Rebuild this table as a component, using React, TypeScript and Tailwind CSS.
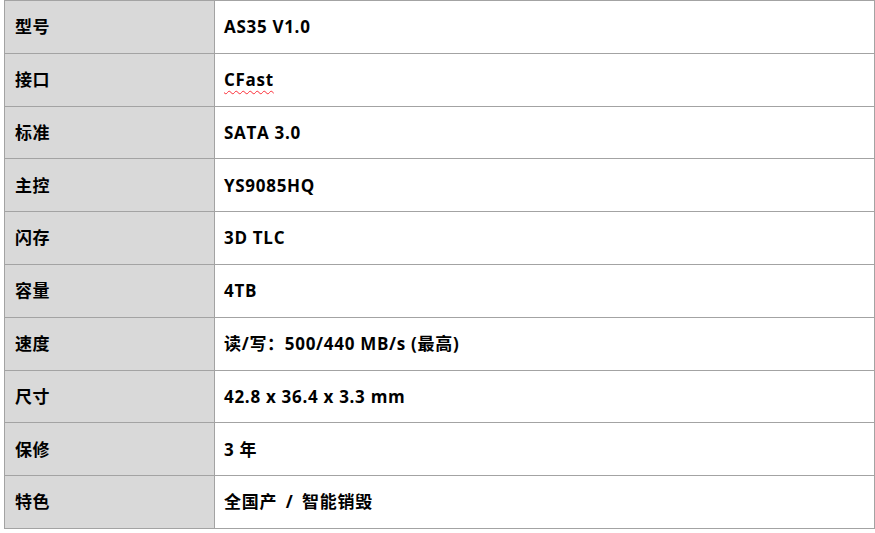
import React from "react";

const rows: [string, string][] = [
  ["型号", "AS35 V1.0"],
  ["接口", "CFast"],
  ["标准", "SATA 3.0"],
  ["主控", "YS9085HQ"],
  ["闪存", "3D TLC"],
  ["容量", "4TB"],
  ["速度", "读/写：500/440 MB/s (最高)"],
  ["尺寸", "42.8 x 36.4 x 3.3 mm"],
  ["保修", "3 年"],
  ["特色", "全国产\u2009 / \u2009智能销毁"],
];

export default function App() {
  return (
    <div
      className="w-[875px] h-[533px] bg-white pl-[4px]"
      style={{ fontFamily: '"Open Sans", "Noto Sans CJK SC", sans-serif' }}
    >
      <div className="w-[871px] border-t border-l border-[#a3a3a3]">
        {rows.map(([k, v], i) => (
          <div key={i} className="grid grid-cols-[210px_1fr] h-[52.8px] border-b border-r border-[#a3a3a3]">
            <div className="bg-[#d9d9d9] border-r border-[#a3a3a3] flex items-center pl-[10px] text-[17px] font-bold text-black tracking-[0.6px]">
              {k}
            </div>
            <div className="flex items-center pl-[9px] text-[17px] font-bold text-black tracking-[0.7px]">
              {v === "CFast" ? (
                <span className="underline decoration-wavy decoration-red-500 decoration-1 underline-offset-[4px]">{v}</span>
              ) : (
                v
              )}
            </div>
          </div>
        ))}
      </div>
    </div>
  );
}
